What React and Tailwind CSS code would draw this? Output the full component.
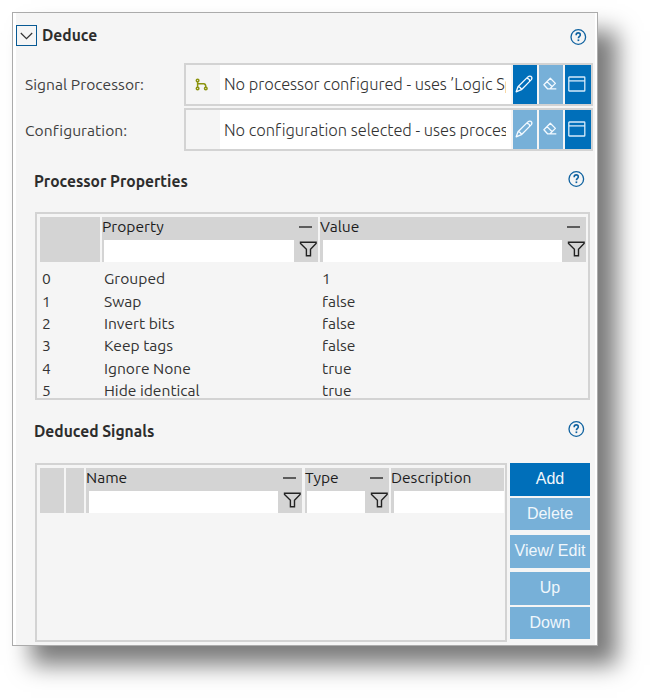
import React from "react";

const UI = "font-['Ubuntu','Noto_Sans',sans-serif]";

function Help({ className = "" }) {
  return (
    <svg className={`block h-[18px] w-[18px] shrink-0 ${className}`} viewBox="0 0 18 18" fill="none" stroke="#0f62a0">
      <circle cx="9.3" cy="9" r="7.3" strokeWidth="1.3" />
      <path d="M7.2 7.2V6.9a2 2 0 0 1 4.1 0c0 1.4-1.9 1.6-1.9 3.4" strokeWidth="1.6" />
      <path d="M9.4 11.4v1.7" strokeWidth="1.7" />
    </svg>
  );
}

function Pencil() {
  return (
    <svg className="block h-[18px] w-[18px]" viewBox="0 0 18 18" fill="none" stroke="#f4faff" strokeWidth="1.3" strokeLinejoin="round">
      <path d="M1.2 16.8 3 11.7 12.9 1.9Q14.3 .7 15.9 1.4 17.6 2.4 16.4 4.6L6.4 14.7ZM3 11.7Q5.6 11.8 6.4 14.7M12 3.4Q14.4 3.6 14.8 6" />
    </svg>
  );
}

function Eraser() {
  return (
    <svg className="block h-[14px] w-[14px]" viewBox="0 0 14 14" fill="none" stroke="#f4faff" strokeWidth="1.3" strokeLinejoin="round">
      <path d="M.9 7.7 7.3 1.3l5.1 5.1L7 11.8H4.5ZM4 4.6l5.2 5.2M6.2 11.8h7.1" />
    </svg>
  );
}

function Win() {
  return (
    <svg className="block h-[16px] w-[18px]" viewBox="0 0 18 16" fill="none" stroke="#d5eafa" strokeWidth="1.3">
      <rect x=".8" y="1" width="16" height="14" rx=".6" />
      <path d="M1 4.9h16" />
    </svg>
  );
}

function Branch() {
  return (
    <svg className="block h-[13px] w-[13px]" viewBox="0 0 13 13" fill="none" stroke="#8c9410" strokeWidth="1.5">
      <circle cx="2.6" cy="2.5" r="1.3" />
      <circle cx="2.6" cy="10.5" r="1.3" />
      <circle cx="10.8" cy="10.5" r="1.3" />
      <path d="M2.6 3.8v5.4M2.6 5.8h6.2q2 0 2 3.4" />
    </svg>
  );
}

function Funnel() {
  return (
    <svg className="block h-[16px] w-[18px] shrink-0" viewBox="0 0 18 16" fill="none" stroke="#222" strokeWidth="1.4">
      <path d="M1.5 1.3h15.6v1.2L11.5 8.3v6.5H7.4V8.3L1.5 2.5Z" />
    </svg>
  );
}

function Field({ label, icon, text, edit, className = "", textClass = "" }) {
  return (
    <div className={`flex h-[43px] items-center ${className}`}>
      <div className={`w-[159px] text-[15.6px] tracking-[0.05px] text-[#3f3f3f] ${textClass}`}>{label}</div>
      <div className="flex h-[43px] w-[409px] border-2 border-[#d3d3d3] bg-[#f5f5f5]">
        <div className="flex w-[34px] items-center pl-[9px]">{icon}</div>
        <div className="flex w-[291px] items-center bg-white pr-[5px] pl-[4px]">
          <div className={`w-full overflow-hidden text-[16.4px] font-light tracking-[-0.04px] whitespace-nowrap text-[#333] ${textClass}`}>{text}</div>
        </div>
        <div className="ml-[2px] flex gap-[2px]">
          <div className={`flex w-[24px] items-center justify-center pr-[2px] pb-px ${edit ? "bg-[#006fba]" : "bg-[#77b0d8]"}`}><Pencil /></div>
          <div className="flex w-[24px] items-center justify-center bg-[#77b0d8] pr-[2px] pb-px"><Eraser /></div>
          <div className="flex w-[26px] items-center bg-[#006fba] pb-px pl-[3px]"><Win /></div>
        </div>
      </div>
    </div>
  );
}

function Column({ label, className, inset, filter = true }) {
  return (
    <div className={`flex h-[45px] flex-col bg-[#d4d4d4] ${className}`}>
      <div className="flex h-[23px] items-center justify-between">
        <span className="relative -top-[3px] text-[15.6px] text-[#1c1c1c]">{label}</span>
        {filter && <span className="relative -top-[2px] mr-[6px] h-[2px] w-[13px] bg-[#5c5c5c]" />}
      </div>
      <div className="flex h-[22px]">
        <div className={`flex-1 bg-white ${inset}`} />
        {filter && <div className="flex w-[24px] items-start justify-end pt-px pr-px"><Funnel /></div>}
      </div>
    </div>
  );
}

const rows = [
  ["0", "Grouped", "1"],
  ["1", "Swap", "false"],
  ["2", "Invert bits", "false"],
  ["3", "Keep tags", "false"],
  ["4", "Ignore None", "true"],
  ["5", "Hide identical", "true"],
];

const buttons = [
  ["Add", "h-[33px] bg-[#006fba]"],
  ["Delete", "mt-[2px] h-[32px] bg-[#77b0d8]"],
  ["View/ Edit", "mt-[5px] h-[33px] bg-[#77b0d8]"],
  ["Up", "mt-[4px] h-[33px] bg-[#77b0d8]"],
  ["Down", "mt-[2px] h-[32px] bg-[#77b0d8]"],
];

function Heading({ children, className = "" }) {
  return (
    <div className={`flex h-[18px] items-center justify-between pr-[10px] pl-[18px] ${className}`}>
      <h2 className="relative top-[2px] text-[15.6px] font-bold text-[#2d2d2d]">{children}</h2>
      <Help />
    </div>
  );
}

export default function App() {
  return (
    <div className={`h-[698px] w-[650px] overflow-hidden bg-white pt-[12px] pl-[12px] leading-[20px] ${UI}`}>
      <div className="h-[634px] w-[586px] border border-[#ababab] bg-white pr-[2px] pl-[3px] shadow-[19px_19px_22px_rgba(0,0,0,0.52)]">
        <div className="h-full bg-[#f5f5f5] pt-[12px]">
          <div className="flex h-[21px] items-center">
            <div className="flex h-[21px] w-[21px] items-center justify-center border border-[#085a94]">
              <svg className="block h-[8px] w-[13px]" viewBox="0 0 13 8" fill="none" stroke="#333" strokeWidth="1.2"><path d="M.8 1l5.7 5.7L12.2 1" /></svg>
            </div>
            <h1 className="ml-[5px] flex-1 pb-[2px] text-[15.6px] font-bold text-[#2d2d2d]">Deduce</h1>
            <Help className="relative top-px mr-[8px]" />
          </div>

          <Field className="mt-[17px] pl-[9px]" textClass="pb-px" label="Signal Processor:" icon={<Branch />} text="No processor configured - uses ’Logic Sp" edit />
          <Field className="mt-[2px] pl-[9px]" textClass="pt-px" label="Configuration:" text="No configuration selected - uses proces" />

          <Heading className="mt-[19px]">Processor Properties</Heading>

          <div className="mt-[24px] ml-[19px] h-[188px] w-[555px] overflow-hidden border-2 border-[#d3d3d3] pt-[3px] pl-[3px]">
            <div className="flex gap-[2px]">
              <div className="h-[45px] w-[60px] bg-[#d4d4d4]" />
              <Column className="w-[216px]" label="Property" inset="ml-[2px]" />
              <Column className="w-[266px]" label="Value" inset="ml-[3px]" />
            </div>
            <div className="mt-[5px] text-[15.6px] text-[#333]">
              {rows.map(([n, name, value]) => (
                <div key={n} className="flex h-[22.4px] items-center">
                  <span className="w-[62px] pl-[2px]">{n}</span>
                  <span className="w-[218px] pl-[2px]">{name}</span>
                  <span className="pl-[2px]">{value}</span>
                </div>
              ))}
            </div>
          </div>

          <Heading className="mt-[20px]">Deduced Signals</Heading>

          <div className="mt-[25px] ml-[19px] flex gap-[3px]">
            <div className="h-[179px] w-[472px] border-2 border-[#d3d3d3] pt-[3px] pl-[3px]">
              <div className="flex">
                <div className="mr-[2px] h-[45px] w-[24px] bg-[#d4d4d4]" />
                <div className="mr-[2px] h-[45px] w-[18px] bg-[#d4d4d4]" />
                <Column className="mr-[3px] w-[216px]" label="Name" inset="ml-[3px]" />
                <Column className="mr-[2px] w-[84px]" label="Type" inset="ml-[2px]" />
                <Column className="w-[113px]" label="Description" inset="ml-[3px]" filter={false} />
              </div>
            </div>
            <div className="w-[80px] font-['Liberation_Sans',sans-serif] text-[16px] text-[#f0f7fc]">
              {buttons.map(([label, style]) => (
                <div key={label} className={`flex items-center justify-center pb-px whitespace-nowrap ${style}`}>{label}</div>
              ))}
            </div>
          </div>
        </div>
      </div>
    </div>
  );
}
